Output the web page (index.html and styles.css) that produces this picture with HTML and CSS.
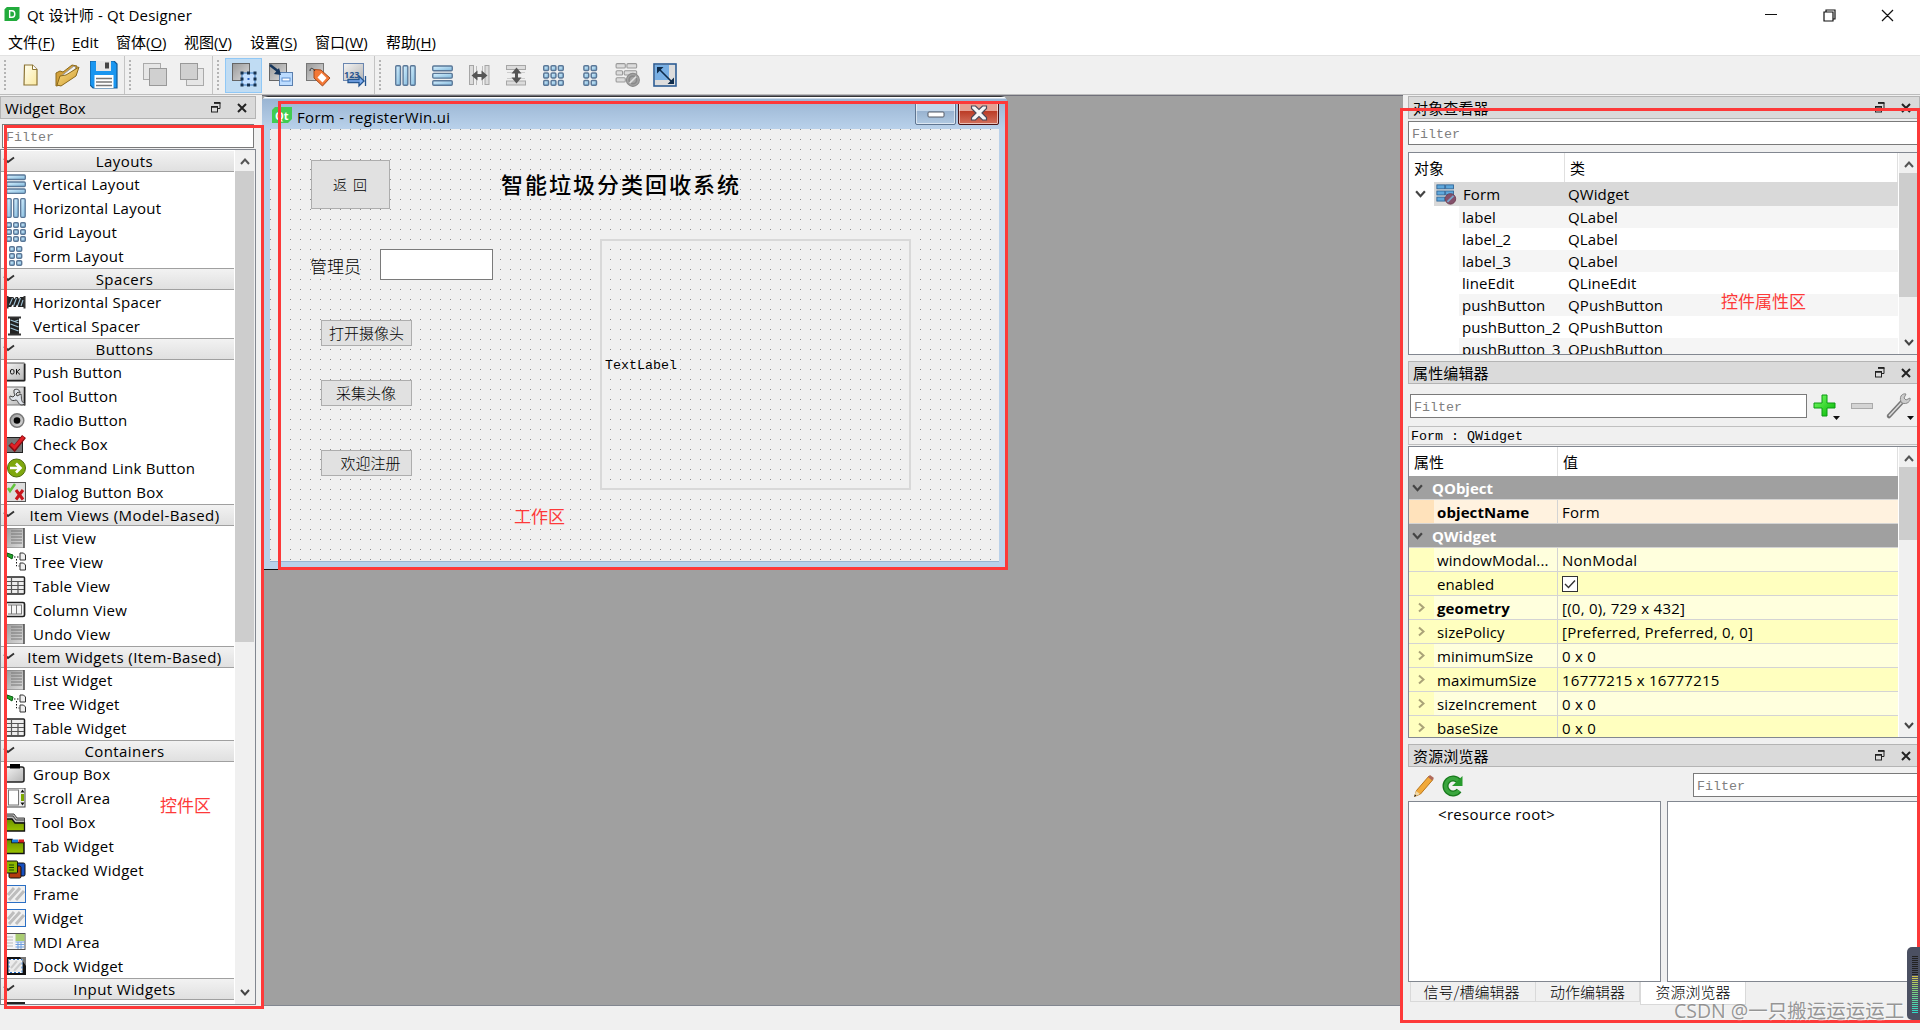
FILE: index.html
```html
<!DOCTYPE html>
<html lang="zh-CN">
<head>
<meta charset="utf-8">
<title>Qt 设计师 - Qt Designer</title>
<link rel="stylesheet" href="styles.css">
</head>
<body>
<svg class="defs" width="0" height="0">
<defs>
<linearGradient id="bl" x1="0" y1="0" x2="1" y2="1"><stop offset="0" stop-color="#d9f2ff"/><stop offset="1" stop-color="#80b8dc"/></linearGradient>
<linearGradient id="gr" x1="0" y1="0" x2="1" y2="1"><stop offset="0" stop-color="#f4f4f4"/><stop offset="1" stop-color="#b4b4b4"/></linearGradient>
<linearGradient id="dg" x1="0" y1="0" x2="1" y2="1"><stop offset="0" stop-color="#999"/><stop offset="1" stop-color="#ddd"/></linearGradient>
<linearGradient id="ye" x1="0" y1="0" x2="1" y2="1"><stop offset="0" stop-color="#fffef0"/><stop offset="1" stop-color="#fbe9a0"/></linearGradient>
<linearGradient id="fo" x1="0" y1="0" x2="1" y2="1"><stop offset="0" stop-color="#fbe08a"/><stop offset="1" stop-color="#cf9a2c"/></linearGradient>
<linearGradient id="gn" x1="0" y1="0" x2="0" y2="1"><stop offset="0" stop-color="#6b8f00"/><stop offset="1" stop-color="#9bc400"/></linearGradient>
<linearGradient id="pl" x1="0" y1="0" x2="1" y2="1"><stop offset="0" stop-color="#7dff6a"/><stop offset="1" stop-color="#00b400"/></linearGradient>
<symbol id="i-vl" viewBox="0 0 20 20"><g fill="url(#bl)" stroke="#5a7797" stroke-width="1.300"><rect x=".7" y="1" width="18.600" height="4.500" rx="1"/><rect x=".7" y="8" width="18.600" height="4.500" rx="1"/><rect x=".7" y="15" width="18.600" height="4.300" rx="1"/></g></symbol>
<symbol id="i-hl" viewBox="0 0 20 20"><g fill="url(#bl)" stroke="#5a7797" stroke-width="1.300"><rect x=".7" y=".7" width="4.500" height="18.600" rx="1"/><rect x="7.700" y=".7" width="4.500" height="18.600" rx="1"/><rect x="14.700" y=".7" width="4.500" height="18.600" rx="1"/></g></symbol>
<symbol id="i-gl" viewBox="0 0 20 20"><g fill="url(#bl)" stroke="#5a7797" stroke-width="1.400"><rect x=".7" y=".7" width="4.600" height="4.600" rx="1"/><rect x="7.700" y=".7" width="4.600" height="4.600" rx="1"/><rect x="14.700" y=".7" width="4.600" height="4.600" rx="1"/><rect x=".7" y="7.700" width="4.600" height="4.600" rx="1"/><rect x="7.700" y="7.700" width="4.600" height="4.600" rx="1"/><rect x="14.700" y="7.700" width="4.600" height="4.600" rx="1"/><rect x=".7" y="14.700" width="4.600" height="4.600" rx="1"/><rect x="7.700" y="14.700" width="4.600" height="4.600" rx="1"/><rect x="14.700" y="14.700" width="4.600" height="4.600" rx="1"/></g></symbol>
<symbol id="i-fl" viewBox="0 0 20 20"><g fill="url(#bl)" stroke="#5a7797" stroke-width="1.400"><rect x="3.700" y=".7" width="4.600" height="4.600" rx="1"/><rect x="10.700" y=".7" width="5" height="4.600" rx="1"/><rect x="3.700" y="7.700" width="4.600" height="4.600" rx="1"/><rect x="10.700" y="7.700" width="5" height="4.600" rx="1"/><rect x="3.700" y="14.700" width="4.600" height="4.600" rx="1"/><rect x="10.700" y="14.700" width="5" height="4.600" rx="1"/></g></symbol>
<symbol id="i-hs" viewBox="0 0 20 20"><rect x="2" y="5" width="16" height="10" fill="#222"/><path d="M1.500 4v12.500M18.500 4v12.500" stroke="#333" stroke-width="2"/><path d="M3.500 13 6.500 6M7.500 14l3-8M11.500 14l3-8M15 14l2-6" stroke="#9fc3d6" stroke-width="1.100"/><path d="M5 15.500l1.500-3 1.500 3zM9.500 15.500l1.500-3 1.500 3zM7 4.500l1.500 2.500L10 4.500zM11.500 4.500 13 7l1.500-2.500z" fill="#fff"/></symbol>
<symbol id="i-vs" viewBox="0 0 20 20"><rect x="4" y="2" width="9" height="16" fill="#222"/><path d="M2 1.500h13M2 18.500h13" stroke="#333" stroke-width="2"/><path d="M4.500 4l8 3M4.500 8l8 3M4.500 12l8 3M12.500 4l-4 1.500" stroke="#9fc3d6" stroke-width="1.100"/></symbol>
<symbol id="i-pb" viewBox="0 0 20 20"><rect x="-1" y="1" width="20" height="18" rx="1" fill="url(#gr)" stroke="#555"/><path d="M18.500 2v16.500H0" fill="none" stroke="#222" stroke-width="1.500"/><rect x="4.500" y="7.500" width="3.500" height="4.500" rx="1.500" fill="none" stroke="#111" stroke-width="1"/><path d="M10.500 7v5.500M14 7l-3 2.700 3 2.800" fill="none" stroke="#111" stroke-width="1"/></symbol>
<symbol id="i-tb" viewBox="0 0 20 20"><rect x="-1" y="1" width="20" height="18" fill="url(#gr)" stroke="#777"/><path d="M18.500 1v18.500" stroke="#222" stroke-width="1.500"/><path d="M8 4c3-2 6 0 6 3l-2-1-2 2 1 2 4-2c1 4-1 7 4 10l-3 1c-4 0-4-5-6-5-5 2-7-2-6-4l3 1 2-2-1-2z" fill="#dfe3ea" stroke="#444"/></symbol>
<symbol id="i-rb" viewBox="0 0 20 20"><circle cx="11" cy="10.500" r="6.800" fill="url(#dg)" stroke="#777" stroke-width="1.500"/><circle cx="11" cy="10.500" r="3.300" fill="#050505"/></symbol>
<symbol id="i-cb" viewBox="0 0 20 20"><rect x="0" y="3.500" width="16.500" height="15" fill="#777" stroke="#222"/><path d="M4 10 8.500 14.500 18 2.500" fill="none" stroke="#8a0c10" stroke-width="5"/><path d="M5 10l3.500 3.500L17.500 3" fill="none" stroke="#e02026" stroke-width="3"/></symbol>
<symbol id="i-cl" viewBox="0 0 20 20"><circle cx="10.500" cy="10" r="9" fill="#7fa80e" stroke="#4d6b08"/><path d="M4 10h10M10 5.500 14.500 10 10 14.500" fill="none" stroke="#fff" stroke-width="2.600"/></symbol>
<symbol id="i-db" viewBox="0 0 20 20"><rect x="-1" y=".5" width="20.500" height="19" fill="#ddd" stroke="#555"/><path d="M2 6l2 3 5-7" fill="none" stroke="#62c43c" stroke-width="2.500"/><path d="M10 8l7 9.500M17 8l-7 9.500" stroke="#c8161c" stroke-width="3"/></symbol>
<symbol id="i-lv" viewBox="0 0 20 20"><rect x="-1" y="0" width="19" height="20" fill="url(#dg)" stroke="#777"/><path d="M5 3h11M5 6h11M5 9h11M5 12h11M5 15h11" stroke="#777"/><path d="M18 0v20" stroke="#333"/></symbol>
<symbol id="i-tv" viewBox="0 0 20 20"><path d="M1 1l6 2-1 4-5-3z" fill="#25a52c" stroke="#0c5c14"/><path d="M8 5h5M10.500 7v7h3" fill="none" stroke="#111" stroke-dasharray="1.500 1.500"/><path d="M14 1h3.500l2 2v5h-5.500zM14 11h3.500l2 2v5h-5.500z" fill="#eee" stroke="#333"/></symbol>
<symbol id="i-ta" viewBox="0 0 20 20"><rect x="-1" y="1" width="19.500" height="17" rx="1" fill="#eee" stroke="#222" stroke-width="1.500"/><path d="M1 5.500h17M1 9.500h17M1 13.500h17M5.500 1v16M12 5.500v12" stroke="#555" stroke-width="1.200"/></symbol>
<symbol id="i-co" viewBox="0 0 20 20"><rect x="-1" y="2.500" width="19.500" height="14" rx="1.500" fill="#f6f6f6" stroke="#222" stroke-width="1.700"/><path d="M5.500 5v9M10.500 5v9M15.500 5v9M2 5h14M2 14h14" stroke="#777"/></symbol>
<symbol id="i-gb" viewBox="0 0 20 20"><rect x="-1" y="3" width="19" height="15" rx="2" fill="url(#gr)" stroke="#222" stroke-width="1.500"/><rect x="4" y="0" width="10" height="4.500" fill="#000"/></symbol>
<symbol id="i-sa" viewBox="0 0 20 20"><rect x="-1" y="0" width="20" height="19" fill="#eee" stroke="#444"/><rect x="2.500" y="2" width="10" height="15" fill="#fff" stroke="#777"/><rect x="15" y="6" width="3" height="7" fill="#7da800"/><path d="M14.500 4.500h4l-2-3zM14.500 14.500h4l-2 3z" fill="#111"/></symbol>
<symbol id="i-to" viewBox="0 0 20 20"><path d="M-1 2h9l3 4h7.500v5H-1z" fill="#bbb" stroke="#444"/><path d="M-1 4h8l3 4h8.500" fill="none" stroke="#444"/><path d="M-1 7h7l3 4h9.500v8H-1z" fill="url(#gn)" stroke="#111" stroke-width="1.300"/></symbol>
<symbol id="i-tw" viewBox="0 0 20 20"><path d="M-1 3.500h7v3h12v11H-1z" fill="url(#gn)" stroke="#111" stroke-width="1.500"/><rect x="6" y="3.500" width="6" height="3" fill="#1c7edb"/><rect x="12.500" y="3.500" width="5.500" height="3" fill="#d51d1d"/></symbol>
<symbol id="i-sw" viewBox="0 0 20 20"><rect x="7" y="3" width="12" height="13" rx="1.500" fill="#174fc0" stroke="#111"/><rect x="3" y="6" width="12" height="12" rx="1.500" fill="#b33b0e" stroke="#111"/><rect x="-1" y="1" width="12.500" height="12" rx="1" fill="#8db600" stroke="#111"/><path d="M3 5h5M3 7.500h5M3 10h5" stroke="#174b00"/></symbol>
<symbol id="i-fr" viewBox="0 0 20 20"><rect x="-1" y="1.500" width="20.500" height="17" fill="#f0f0f0" stroke="#2b6fc4"/><path d="M2 11 8 4M3 16 14 4M10 16l8-9" stroke="#bdbdbd" stroke-width="3"/></symbol>
<symbol id="i-md" viewBox="0 0 20 20"><rect x="-1" y="1.500" width="20" height="16" fill="#f4f4f4" stroke="#555"/><rect x="9.500" y="2" width="9" height="7" fill="#a9cc72"/><path d="M1 5h6M1 8h6M1 11h6M1 14h6" stroke="#bbb"/><path d="M9.500 10h9M9.500 12.500h9M9.500 15h9M12 10v7M15 10v7" stroke="#6e9fe0"/></symbol>
<symbol id="i-dw" viewBox="0 0 20 20"><rect x="-1" y="1" width="21" height="18" fill="#111"/><path d="M14 1h6v9z" fill="#777"/><rect x="3" y="3.500" width="13" height="13" fill="#ececec" stroke="#fff"/><rect x="3" y="3.500" width="13" height="13" fill="none" stroke="#2770c8" stroke-dasharray="2 2"/><path d="M5 12l6-7M8 15l7-8" stroke="#ccc" stroke-width="2"/></symbol>
<symbol id="i-bl" viewBox="0 0 24 24"><g fill="#dcdcdc" stroke="#999"><rect x="1" y="1.500" width="8.500" height="4" rx="1"/><rect x="11" y="1.500" width="9" height="4" rx="1"/><rect x="1" y="8" width="6" height="4" rx="1"/><rect x="8.500" y="8" width="11.500" height="4" rx="1"/><rect x="1" y="14.500" width="8.500" height="4" rx="1"/></g><circle cx="16.500" cy="16.500" r="6" fill="#a4a4a4" stroke="#8c8c8c"/><circle cx="16.500" cy="16.500" r="3.500" fill="none" stroke="#8a8a8a" stroke-width="1.500"/><path d="M13.500 19.500l6-6" stroke="#ddd" stroke-width="1.500"/></symbol>
<symbol id="i-float" viewBox="0 0 10 11"><path d="M3 1h6v5.500H7" fill="none" stroke="#222"/><path d="M3 .8h6.500M.5 4.800H7" stroke="#222" stroke-width="1.700"/><rect x=".5" y="4.500" width="6" height="5.500" fill="#ddd" stroke="#222"/><path d="M0 5h7" stroke="#222" stroke-width="1.500"/></symbol>
<symbol id="i-x" viewBox="0 0 10 10"><path d="M1 1l8 8M9 1l-8 8" stroke="#222" stroke-width="2"/></symbol>
<symbol id="i-up" viewBox="0 0 10 7"><path d="M1 6l4-4.500L9 6" fill="none" stroke="#555" stroke-width="2"/></symbol>
<symbol id="i-dn" viewBox="0 0 10 7"><path d="M1 1l4 4.500L9 1" fill="none" stroke="#444" stroke-width="2"/></symbol>
<symbol id="i-rt" viewBox="0 0 7 10"><path d="M1 1l4.500 4L1 9" fill="none" stroke="#aaa378" stroke-width="2"/></symbol>
<symbol id="i-tick" viewBox="0 0 12 8"><path d="M1 2.500l4 3.500L11 1.500" fill="none" stroke="#333" stroke-width="1.900"/></symbol>
</defs>
</svg>

<header class="titlebar">
  <svg class="appicon" viewBox="0 0 16 16"><path d="M2.500 0H16v12l-3 3H0V2.500z" fill="#22ab3c"/><path d="M5.500 4h2.500c4 0 4 7 0 7H5.500z" fill="none" stroke="#fff" stroke-width="1.500"/></svg>
  <span class="apptitle">Qt 设计师 - Qt Designer</span>
  <svg class="winbtns" width="140" height="28" viewBox="0 0 140 28"><g fill="none" stroke="#111" stroke-width="1.200"><path d="M5 13.500h12M64 11v9h9v-9zM66 11V9h9v9h-2M122 9l11 11M133 9l-11 11"/></g></svg>
</header>
<nav class="menubar">
  <span class="m1">文件(<u>F</u>)</span><span class="m2"><u>E</u>dit</span><span class="m3">窗体(<u>O</u>)</span><span class="m4">视图(<u>V</u>)</span><span class="m5">设置(<u>S</u>)</span><span class="m6">窗口(<u>W</u>)</span><span>帮助(<u>H</u>)</span>
</nav>
<div class="toolbar">
  <div class="tgroup g1"><i class="grip"></i>
    <b class="tool"><svg width="28" height="28" viewBox="0 0 28 28"><path d="M8.500 4h8l4.500 4.500V24h-13z" fill="url(#ye)" stroke="#8c7434" stroke-width="1.200"/><path d="M16.500 4v4.500H21" fill="#fff" stroke="#8c7434"/></svg></b>
    <b class="tool"><svg width="28" height="28" viewBox="0 0 28 28"><path d="M3 12l4-2 3 1 9-7 5 1v5L8 24l-5 1z" fill="#d2a03a" stroke="#8c6a1c"/><path d="M7 16 21 5l2 2L9 20z" fill="#f4f4f0" stroke="#999"/><path d="M7 15l6-1 13-8-3 9L8 25l-4-1z" fill="url(#fo)" stroke="#8c6a1c"/></svg></b>
    <b class="tool"><svg width="28" height="28" viewBox="0 0 28 28"><path d="M1 0h23l3 3v24H3l-3-3V0z" fill="#1a96f0" stroke="#125a96" stroke-width="1.200"/><rect x="6" y="0" width="15" height="10" fill="#e6e6e6"/><rect x="15" y="1.500" width="4" height="6" fill="#444"/><rect x="4.500" y="14" width="19" height="13" fill="#fff"/><path d="M6 17.500h16M6 21h16M6 24.500h16" stroke="#777" stroke-width="1.500"/></svg></b>
  </div>
  <div class="tgroup g2"><i class="grip"></i>
    <b class="tool"><svg width="26" height="26" viewBox="0 0 26 26"><rect x="1.500" y="1.500" width="17" height="16" fill="#e6e6e6" stroke="#aaa"/><rect x="7.500" y="6.500" width="17" height="17" fill="#d0d0d0" stroke="#999"/></svg></b>
    <b class="tool"><svg width="26" height="26" viewBox="0 0 26 26"><rect x="7.500" y="6.500" width="17" height="17" fill="#e6e6e6" stroke="#aaa"/><rect x="1.500" y="1.500" width="17" height="16" fill="#d0d0d0" stroke="#999"/></svg></b>
  </div>
  <div class="tgroup g3"><i class="grip"></i>
    <b class="tool on"><svg width="26" height="26" viewBox="0 0 26 26"><rect x="1.500" y="1.500" width="17" height="17" fill="url(#dg)" stroke="#666"/><rect x="11" y="11" width="13" height="12" fill="#c4e0ff" stroke="#3878c0"/><g fill="#173350"><rect x="9.500" y="9.500" width="3" height="3"/><rect x="16" y="9.500" width="3" height="3"/><rect x="22.500" y="9.500" width="3" height="3"/><rect x="9.500" y="15.500" width="3" height="3"/><rect x="22.500" y="15.500" width="3" height="3"/><rect x="9.500" y="21.500" width="3" height="3"/><rect x="16" y="21.500" width="3" height="3"/><rect x="22.500" y="21.500" width="3" height="3"/><rect x="16.500" y="16" width="2" height="2" fill="#2860c0"/></g></svg></b>
    <b class="tool"><svg width="26" height="26" viewBox="0 0 26 26"><rect x="1.500" y="1.500" width="17" height="17" fill="url(#dg)" stroke="#666"/><rect x="11.500" y="10.500" width="13" height="13" fill="#bcdcff" stroke="#5a7fae"/><rect x="14" y="16" width="8" height="3" fill="#fff" stroke="#5a8ed0"/><path d="M2 3l9 7" stroke="#16365c" stroke-width="2.500"/><path d="M13 13l-7-1 5-6z" fill="#16365c"/></svg></b>
    <b class="tool"><svg width="26" height="26" viewBox="0 0 26 26"><rect x="1.500" y="1.500" width="17" height="17" fill="url(#dg)" stroke="#777"/><path d="M9 7.500l7 .5 9 8-7.500 8L9 16z" fill="#f37836" stroke="#a3481a"/><path d="M16.500 11l5 5-4 4.500-5-5z" fill="#fff"/><path d="M10 9C8 6 5 5 5 9" fill="none" stroke="#333"/></svg></b>
    <b class="tool"><svg width="26" height="26" viewBox="0 0 26 26"><rect x="1.500" y="1.500" width="20" height="17" fill="url(#gr)" stroke="#6a86b0"/><text x="2" y="16" class="num">123</text><path d="M6 17.500h11v-3.500l5 5-5 5v-3.500H6zM23.500 14v10" fill="#7eaef0" stroke="#24558f" stroke-width="1.300"/></svg></b>
  </div>
  <div class="tgroup g4"><i class="grip"></i>
    <b class="tool"><svg width="21" height="21"><use href="#i-hl"/></svg></b>
    <b class="tool"><svg width="21" height="21"><use href="#i-vl"/></svg></b>
    <b class="tool"><svg width="21" height="21" viewBox="0 0 21 21"><g fill="#dcdcdc" stroke="#a6a6a6"><rect x=".5" y=".5" width="4" height="19"/><rect x="16" y=".5" width="4" height="19"/></g><path d="M7.500 1v19M13.500 1v19" stroke="#bbb"/><path d="M2.500 10.500l6-5v3.500h4V5.500l6 5-6 5V12h-4v3.500z" fill="#555"/></svg></b>
    <b class="tool"><svg width="21" height="21" viewBox="0 0 21 21"><g fill="#dcdcdc" stroke="#a6a6a6"><rect x=".5" y=".5" width="19" height="4"/><rect x=".5" y="16" width="19" height="4"/></g><path d="M1 7.500h18M1 13.500h18" stroke="#ccc"/><path d="M10.500 2.500l5 6H12v4h3.500l-5 6-5-6H9v-4H5.500z" fill="#555"/></svg></b>
    <b class="tool"><svg width="21" height="21"><use href="#i-gl"/></svg></b>
    <b class="tool"><svg width="21" height="21"><use href="#i-fl"/></svg></b>
    <b class="tool"><svg width="26" height="26"><use href="#i-bl"/></svg></b>
    <b class="tool"><svg width="24" height="24" viewBox="0 0 24 24"><rect x="1" y="1" width="22" height="22" fill="#ddd" stroke="#2d5d94" stroke-width="1.600"/><path d="M2 2h14v15H2z" fill="#78afe4"/><path d="M6 6l13 13" stroke="#0e2c4c" stroke-width="1.600"/><path d="M4 4h6.500L4 10.500zM21 21h-6.500l6.500-6.500z" fill="#0e2c4c"/></svg></b>
  </div>
</div>

<main class="body">
  <aside class="left">
    <div class="docktitle"><span>Widget Box</span><svg class="fl" width="10" height="11"><use href="#i-float"/></svg><svg width="10" height="10"><use href="#i-x"/></svg></div>
    <div class="filter lf">Filter</div>
    <div class="wtree">
      <div class="wlist">
        <div class="sec"><svg><use href="#i-tick"/></svg>Layouts</div>
        <div class="it"><svg><use href="#i-vl"/></svg>Vertical Layout</div>
        <div class="it"><svg><use href="#i-hl"/></svg>Horizontal Layout</div>
        <div class="it"><svg><use href="#i-gl"/></svg>Grid Layout</div>
        <div class="it"><svg><use href="#i-fl"/></svg>Form Layout</div>
        <div class="sec"><svg><use href="#i-tick"/></svg>Spacers</div>
        <div class="it"><svg><use href="#i-hs"/></svg>Horizontal Spacer</div>
        <div class="it"><svg><use href="#i-vs"/></svg>Vertical Spacer</div>
        <div class="sec"><svg><use href="#i-tick"/></svg>Buttons</div>
        <div class="it"><svg><use href="#i-pb"/></svg>Push Button</div>
        <div class="it"><svg><use href="#i-tb"/></svg>Tool Button</div>
        <div class="it"><svg><use href="#i-rb"/></svg>Radio Button</div>
        <div class="it"><svg><use href="#i-cb"/></svg>Check Box</div>
        <div class="it"><svg><use href="#i-cl"/></svg>Command Link Button</div>
        <div class="it"><svg><use href="#i-db"/></svg>Dialog Button Box</div>
        <div class="sec"><svg><use href="#i-tick"/></svg>Item Views (Model-Based)</div>
        <div class="it"><svg><use href="#i-lv"/></svg>List View</div>
        <div class="it"><svg><use href="#i-tv"/></svg>Tree View</div>
        <div class="it"><svg><use href="#i-ta"/></svg>Table View</div>
        <div class="it"><svg><use href="#i-co"/></svg>Column View</div>
        <div class="it"><svg><use href="#i-lv"/></svg>Undo View</div>
        <div class="sec"><svg><use href="#i-tick"/></svg>Item Widgets (Item-Based)</div>
        <div class="it"><svg><use href="#i-lv"/></svg>List Widget</div>
        <div class="it"><svg><use href="#i-tv"/></svg>Tree Widget</div>
        <div class="it"><svg><use href="#i-ta"/></svg>Table Widget</div>
        <div class="sec"><svg><use href="#i-tick"/></svg>Containers</div>
        <div class="it"><svg><use href="#i-gb"/></svg>Group Box</div>
        <div class="it"><svg><use href="#i-sa"/></svg>Scroll Area</div>
        <div class="it"><svg><use href="#i-to"/></svg>Tool Box</div>
        <div class="it"><svg><use href="#i-tw"/></svg>Tab Widget</div>
        <div class="it"><svg><use href="#i-sw"/></svg>Stacked Widget</div>
        <div class="it"><svg><use href="#i-fr"/></svg>Frame</div>
        <div class="it"><svg><use href="#i-fr"/></svg>Widget</div>
        <div class="it"><svg><use href="#i-md"/></svg>MDI Area</div>
        <div class="it"><svg><use href="#i-dw"/></svg>Dock Widget</div>
        <div class="sec"><svg><use href="#i-tick"/></svg>Input Widgets</div>
        <div class="peek"></div>
      </div>
      <div class="sbar"><svg class="au" width="10" height="7"><use href="#i-up"/></svg><i class="thumb tl"></i><svg class="ad" width="10" height="7"><use href="#i-dn"/></svg></div>
    </div>
  </aside>

  <section class="mdi">
    <div class="subwin">
      <div class="subtitle">
        <svg class="qt" viewBox="0 0 20 16"><path d="M3 0h17v12l-4 4H0V3z" fill="#41cd52"/><text x="3" y="12.500">Qt</text></svg>
        <span>Form - registerWin.ui</span>
        <div class="wbtn min"><svg width="18" height="8" viewBox="0 0 18 8"><rect x="1" y="1" width="16" height="5" rx="1" fill="#fff" stroke="#555a66"/></svg></div>
        <div class="wbtn cls"><svg width="18" height="16" viewBox="0 0 18 16"><path d="M1.500 1h4L9 4.500 12.500 1h4v2.500L12 8l4.500 4.500V15h-4L9 11.500 5.500 15h-4v-2.500L6 8 1.500 3.500z" fill="#f6f6f6" stroke="#4a4a5a" stroke-width="1.200"/></svg></div>
      </div>
      <div class="canvas">
        <div class="w pbtn back">返&nbsp; 回</div>
        <div class="w head">智能垃圾分类回收系统</div>
        <div class="w lab">管理员</div>
        <div class="w edit"></div>
        <div class="w pbtn b1">打开摄像头</div>
        <div class="w pbtn b2">采集头像</div>
        <div class="w pbtn b3">欢迎注册</div>
        <div class="w view">TextLabel</div>
      </div>
    </div>
  </section>

  <aside class="right">
    <div class="docktitle"><span>对象查看器</span><svg class="fl" width="10" height="11"><use href="#i-float"/></svg><svg width="10" height="10"><use href="#i-x"/></svg></div>
    <div class="filter rf">Filter</div>
    <div class="tree otree">
      <div class="rows">
        <div class="hd"><span>对象</span><span>类</span></div>
        <div class="or sel"><svg class="ex" width="11" height="8"><use href="#i-dn"/></svg><em><svg class="fi" width="21" height="21" viewBox="0 0 24 24"><g fill="#5fa8dc" stroke="#2f6496"><rect x="1" y="1" width="9" height="4.500"/><rect x="11" y="1" width="9" height="4.500"/><rect x="1" y="8" width="9" height="4.500"/><rect x="11" y="8" width="9" height="4.500"/><rect x="1" y="15" width="9" height="4.500"/></g><circle cx="16.500" cy="17" r="6" fill="#84506a" stroke="#6a3a4e"/><path d="M13 20.500l7-7" stroke="#7ba6cc" stroke-width="2"/></svg>Form</em><span>QWidget</span></div>
        <div class="or alt"><em>label</em><span>QLabel</span></div>
        <div class="or"><em>label_2</em><span>QLabel</span></div>
        <div class="or alt"><em>label_3</em><span>QLabel</span></div>
        <div class="or"><em>lineEdit</em><span>QLineEdit</span></div>
        <div class="or alt"><em>pushButton</em><span>QPushButton</span></div>
        <div class="or"><em>pushButton_2</em><span>QPushButton</span></div>
        <div class="or alt"><em>pushButton_3</em><span>QPushButton</span></div>
      </div>
      <div class="sbar"><svg class="au" width="10" height="7"><use href="#i-up"/></svg><i class="thumb to"></i><svg class="ad" width="10" height="7"><use href="#i-dn"/></svg></div>
    </div>
    <div class="docktitle t2"><span>属性编辑器</span><svg class="fl" width="10" height="11"><use href="#i-float"/></svg><svg width="10" height="10"><use href="#i-x"/></svg></div>
    <div class="ptools">
      <div class="filter">Filter</div>
      <svg width="106" height="30" viewBox="0 0 106 30"><path d="M14 4h5v8h8v5h-8v8h-5v-8H6v-5h8z" fill="url(#pl)" stroke="#0b9a12"/><path d="M25 25h7l-3.500 4zM99 25h7l-3.500 4z" fill="#111"/><rect x="43.500" y="12.500" width="21" height="5" fill="#d4d4d4" stroke="#aaa"/><path d="M81 25 94 11" stroke="#777" stroke-width="4.500" stroke-linecap="round"/><path d="M81 25 94 11" stroke="#ddd" stroke-width="1.500"/><path d="M93 5c2-3 5-2 5-2l-2 4 2 2 4-2c1 3-3 7-8 5-2-2-2-5-1-7z" fill="#ccc" stroke="#888"/></svg>
    </div>
    <div class="objlabel">Form : QWidget</div>
    <div class="tree ptree">
      <div class="rows">
        <div class="hd"><span>属性</span><span>值</span></div>
        <div class="grp"><svg width="11" height="8"><use href="#i-dn"/></svg>QObject</div>
        <div class="pr o"><i></i><em class="bold">objectName</em><span>Form</span></div>
        <div class="grp"><svg width="11" height="8"><use href="#i-dn"/></svg>QWidget</div>
        <div class="pr"><i></i><em>windowModal...</em><span>NonModal</span></div>
        <div class="pr d"><i></i><em>enabled</em><span><svg class="ck" width="16" height="16" viewBox="0 0 16 16"><rect x=".5" y=".5" width="15" height="15" fill="#fff" stroke="#333"/><path d="M3 8l3.500 3.500L13 4.500" fill="none" stroke="#333" stroke-width="1.400"/></svg></span></div>
        <div class="pr"><i><svg width="7" height="11"><use href="#i-rt"/></svg></i><em class="bold">geometry</em><span>[(0, 0), 729 x 432]</span></div>
        <div class="pr d"><i><svg width="7" height="11"><use href="#i-rt"/></svg></i><em>sizePolicy</em><span>[Preferred, Preferred, 0, 0]</span></div>
        <div class="pr"><i><svg width="7" height="11"><use href="#i-rt"/></svg></i><em>minimumSize</em><span>0 x 0</span></div>
        <div class="pr d"><i><svg width="7" height="11"><use href="#i-rt"/></svg></i><em>maximumSize</em><span>16777215 x 16777215</span></div>
        <div class="pr"><i><svg width="7" height="11"><use href="#i-rt"/></svg></i><em>sizeIncrement</em><span>0 x 0</span></div>
        <div class="pr d"><i><svg width="7" height="11"><use href="#i-rt"/></svg></i><em>baseSize</em><span>0 x 0</span></div>
      </div>
      <div class="sbar"><svg class="au" width="10" height="7"><use href="#i-up"/></svg><i class="thumb tp"></i><svg class="ad" width="10" height="7"><use href="#i-dn"/></svg></div>
    </div>
    <div class="docktitle t3"><span>资源浏览器</span><svg class="fl" width="10" height="11"><use href="#i-float"/></svg><svg width="10" height="10"><use href="#i-x"/></svg></div>
    <div class="rtools">
      <svg width="60" height="26" viewBox="0 0 60 26"><path d="M6.500 23.500l2-6L21 3l4 3.500L12.500 21z" fill="#f1a93a" stroke="#b9761c"/><path d="M6 24l2-6 4 3z" fill="#f0d8a8"/><path d="M6 24l1-2.500 1.500 1z" fill="#222"/><path d="M20 4l2-2 4 3-2 2.500z" fill="#b06a5a"/><path d="M51 8.500a7.500 7.500 0 1 0 0 9" fill="none" stroke="#187a1c" stroke-width="6"/><path d="M51 8.500a7.500 7.500 0 1 0 0 9" fill="none" stroke="#3aa63e" stroke-width="3.500"/><path d="M54.500 3v10H44z" fill="#279a2c"/></svg>
      <div class="filter">Filter</div>
    </div>
    <div class="lists"><div class="l1">&lt;resource root&gt;</div><div class="l2"></div></div>
    <div class="tabs"><span class="ta">信号/槽编辑器</span><span class="tb">动作编辑器</span><span class="tc">资源浏览器</span></div>
  </aside>
</main>
<footer class="status"></footer>

<div class="mark k1"></div><div class="mark k2"></div><div class="mark k3"></div>
<div class="note n1">控件区</div><div class="note n2">工作区</div><div class="note n3">控件属性区</div>
<div class="water">CSDN @一只搬运运运运工</div>
<div class="meter"><i></i></div>
</body>
</html>
```
FILE: styles.css
```css
*{box-sizing:border-box}
body{margin:0;width:1920px;height:1030px;overflow:hidden;background:#f0f0f0;color:#000;font:15px/20px "Open Sans","Noto Sans CJK SC",sans-serif;position:relative;display:flex;flex-direction:column;white-space:nowrap}
svg{display:block;flex:none}
.defs{position:absolute}
i,em,b{font-style:normal;font-weight:400}
.titlebar{height:28px;background:#fff;display:flex;align-items:center;padding:1px 0 0 4px;font-size:15px;letter-spacing:.17px}
.appicon{width:16px;height:15px;margin-right:7px}
.apptitle{flex:1}
.winbtns{margin-right:20px}
.menubar{height:27px;background:#fff;display:flex;align-items:center;padding:1px 0 0 8px;font-size:15px;line-height:26px}
.menubar u{text-underline-offset:2px}
.menubar .m1{width:64px}.menubar .m2{width:44px}.menubar .m3{width:68px}.menubar .m4{width:66px}.menubar .m5{width:65px}.menubar .m6{width:71px}
.toolbar{height:40px;display:flex;border-top:1px solid #e2e2e2;border-bottom:1px solid #bcbcbc}
.tgroup{display:flex;align-items:center;border-right:1px solid #c4c4c4;padding-left:4px}
.g1{width:125px}.g2{width:88px}.g3{width:162px}.g4{border:0}
.grip{width:2px;height:31px;margin-right:6px;background:repeating-linear-gradient(#b4b4b4 0 2px,transparent 2px 4px)}
.g1 .grip,.g2 .grip{margin-right:5px}
.tool{width:37px;height:35px;display:flex;align-items:center;justify-content:center;border:1px solid transparent;flex:none}
.tool.on{background:#c0dcf3;border-color:#90c8f6}
.num{font:bold 9px "Open Sans",sans-serif;fill:#2a5590}
.body{height:911px;display:flex}
.left{width:262px;padding-top:1px;flex:none}
.docktitle{height:23px;border:1px solid #b4b4b4;background:#dadada;display:flex;align-items:center;padding:0 8px 0 4px;flex:none;letter-spacing:.15px}
.docktitle span{flex:1}
.docktitle .fl{margin-right:16px}
.left .docktitle{width:256px}
.filter{height:24px;border:1px solid #7a7a7a;background:#fff;color:#808080;font:13.330px/25px "Liberation Mono",monospace;padding-left:3px}
.lf{width:252px;margin:5px 0 1px 2px}
.wtree{width:256px;height:856px;border:1px solid #828790;background:#fff;display:flex;overflow:hidden}
.wlist{width:233px;height:854px;overflow:hidden;flex:none;letter-spacing:.26px}
.sec{height:22px;border-top:1px solid #fff;border-bottom:1px solid #a0a0a0;background:linear-gradient(#f2f2f2,#e0e0e0);text-align:center;position:relative;line-height:21px;padding-left:14px;letter-spacing:.42px}
.it+.sec{border-top-color:#a0a0a0}
.sec svg{position:absolute;left:2px;top:5px;width:12px;height:8px}
.it{height:24px;display:flex;align-items:center;line-height:24px}
.it svg{width:20px;height:20px;margin:0 7px 0 5px}
.peek{height:3px;width:18px;margin:2px 0 0 6px;background:#222}
.sbar{width:20px;background:#f0f0f0;position:relative;flex:none;margin-left:1px}
.sbar svg,.thumb{position:absolute}
.au{left:5px;top:8px}.ad{left:5px;bottom:8px}
.thumb{left:0;width:19px;background:#cdcdcd}
.tl{top:21px;height:471px}
.mdi{width:1141px;background:#a0a0a0;border-top:1px solid #70707a;border-bottom:1px solid #828790;position:relative;flex:none}
.subwin{position:absolute;left:0;top:0;width:745px;height:473px;border:solid #b9d1ea;border-width:0 8px 7px;border-bottom-color:#b9d1ea;box-shadow:0 1px #111;border-radius:6px 6px 0 0;background:#99b4d1}
.subtitle{height:33px;margin:0 -8px;padding:5px 8px 0 10px;background:linear-gradient(#333 0 1px,#fff 1px 2px,#9ab5d3 3px,#b9d1ea);border-radius:6px 6px 0 0;display:flex;align-items:center}
.subtitle span{flex:1;padding-top:3px;letter-spacing:.32px}
.qt{width:20px;height:16px;margin-right:5px}
.qt text{font:bold 11px "Open Sans",sans-serif;fill:#fff}
.wbtn{width:41px;height:24px;margin:-5px 0 0 2px;border:1px solid #5f7590;box-shadow:inset 0 0 0 1px #ffffff90;border-radius:2px;display:flex;align-items:center;justify-content:center;background:linear-gradient(#c3d6ea 0 40%,#98b2cf 41%,#b0c9e2)}
.min svg{margin-top:4px}
.cls{border-color:#4c1212;background:linear-gradient(#e5a193 0 40%,#bb3b25 41%,#d2705c)}
.canvas{height:432px;width:729px;position:relative;background:radial-gradient(circle at .5px .5px,#8c8c8c .6px,transparent .7px) 0 0/10px 10px,#f0f0f0;font-size:14px;font-weight:300}
.w{position:absolute}
.pbtn{background:#e1e1e1;border:1px solid #adadad;text-align:center;font:300 15px/23px "Noto Sans CJK SC",sans-serif}
.back{left:41px;top:31px;width:79px;height:49px;line-height:46px;font-size:14px;padding-right:1px}
.head{left:231px;top:39px;font:500 22px/30px "Noto Sans CJK SC",sans-serif;letter-spacing:2px}
.lab{left:40px;top:126px;font:300 17px/22px "Noto Sans CJK SC",sans-serif}
.edit{left:110px;top:120px;width:113px;height:31px;background:#fff;border:1px solid #7a7a7a}
.b1,.b2,.b3{left:51px;width:91px;height:26px}
.b1{top:191px}.b2{top:251px;padding-right:1px}.b3{top:321px;padding-left:8px}
.view{left:330px;top:110px;width:311px;height:251px;border:2px solid #d8d8d8;font:13.330px/249px "Liberation Mono",monospace;padding-left:3px}
.right{width:517px;padding:1px 0 0 5px;flex:none;overflow:hidden}
.right .docktitle{width:512px;padding-right:8px}
.rf{width:514px;margin-top:2px}
.tree{border:1px solid #828790;border-right:0;background:#fff;display:flex;overflow:hidden}
.tree .rows{width:489px;flex:none;overflow:hidden}
.otree{margin-top:7px;height:203px}
.otree .sbar,.ptree .sbar{margin-left:1px}
.hd{height:29px;display:flex;line-height:31px}
.hd span{border-right:1px solid #e0e0e0;padding-left:5px}
.otree .hd span:first-child{width:156px}.ptree .hd span:first-child{width:149px}
.hd span:last-child{flex:1}
.or{height:22px;display:flex;line-height:22px;padding-left:50px}
.or em{width:106px;padding-left:3px;flex:none;display:flex;align-items:center;letter-spacing:.08px}
.or span{flex:1;padding-left:3px;letter-spacing:.1px}
.or.alt em,.or.alt span{background:#f5f5f5}
.or.sel{height:24px;padding-left:6px;line-height:24px;align-items:center}
.or.sel .ex{margin-right:8px}
.or.sel em{width:131px;background:#d9d9d9;height:24px;padding-left:2px}
.or.sel span{background:#d9d9d9;height:24px}
.fi{margin-right:6px}
.to{top:20px;height:124px}.tp{top:20px;height:73px}
.t2{margin-top:6px}
.ptools{display:flex;padding:10px 0 0 2px;height:43px;margin-bottom:-1px}
.ptools .filter{width:397px;flex:none;margin-right:1px}
.ptools svg{margin-top:-3px}
.objlabel{height:19px;border:1px solid #c0c0c0;border-right:0;font:13.330px/19px "Liberation Mono",monospace;padding-left:2px}
.ptree{height:292px;margin-top:1px}
.grp{height:24px;background:#a0a0a0;color:#fff;font-weight:700;border-bottom:1px solid #d4d4d4;display:flex;align-items:center;gap:9px;padding-left:3px;line-height:22px}
.pr{height:24px;display:flex;border-bottom:1px solid #d4d4d4;background:#ffffdd;line-height:24px}
.pr i{width:25px;background:#ffffbf;display:flex;align-items:center;justify-content:center;flex:none}
.pr em{width:124px;padding-left:3px;border-right:1px solid #d4d4d4;overflow:hidden;flex:none;letter-spacing:.1px}
.pr em.bold{font-weight:700}
.pr span{padding-left:4px;letter-spacing:.25px}
.pr.d{background:#ffffbf}.pr.o{background:#fff2df}.pr.o i{background:#ffe2bb}
.ck{margin-top:4px}
.t3{margin-top:6px}
.rtools{height:34px;display:flex;justify-content:space-between;padding-top:6px}
.rtools .filter{width:227px;flex:none}
.lists{height:181px;display:flex;gap:6px}
.lists div{border:1px solid #828790;background:#fff}
.l1{width:253px;padding:2px 0 0 29px;flex:none;font-size:15px;letter-spacing:.32px}.l2{flex:1}
.tabs{display:flex;padding-left:2px;font:300 15px/20px "Noto Sans CJK SC",sans-serif}
.tabs span{border:1px solid #d9d9d9;border-top:0;text-align:center;height:20px}
.ta{width:126px;padding-right:3px}.tb{width:104px;border-left:0!important}.tc{width:106px;height:23px!important;background:#fff}
.status{flex:1}
.mark{position:absolute;border:3px solid #fd3939}
.k1{left:4px;top:125px;width:260px;height:884px}
.k2{left:278px;top:101px;width:730px;height:469px}
.k3{left:1400px;top:108px;width:520px;height:915px}
.note{position:absolute;color:#fd3939;font-size:17px;line-height:20px}
.n1{left:160px;top:796px}.n2{left:514px;top:507px}.n3{left:1721px;top:292px}
.water{position:absolute;left:1674px;top:998px;font-size:19.500px;line-height:26px;color:#808080d0;text-shadow:1px 1px #fff8}
.meter{position:absolute;left:1907px;top:947px;width:13px;height:73px;background:#4b5062;border-radius:5px 0 0 5px;padding:9px 2px 0 5px}
.meter i{display:block;height:57px;background:repeating-linear-gradient(transparent 0 1px,#4b5062 1px 2px),linear-gradient(#222 0 35%,#d8c84a 36%,#7fd07a 60%,#30d8c8)}
```
